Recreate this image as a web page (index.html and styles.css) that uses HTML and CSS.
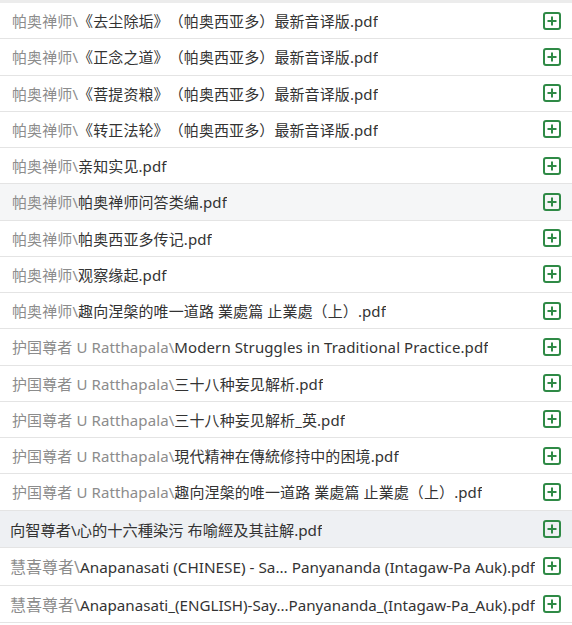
FILE: index.html
```html
<!DOCTYPE html>
<html lang="zh-CN">
<head>
  <meta charset="UTF-8">
  <meta name="viewport" content="width=device-width, initial-scale=1.0">
  <title>文件列表</title>
  <link rel="stylesheet" href="styles.css">
</head>
<body>
  <div class="list-top"></div>
  <ul class="file-list">
    <li class="file-row"><span class="file-name"><span class="dir">帕奥禅师\</span>《去尘除垢》（帕奥西亚多）最新音译版.pdf</span><button class="add-btn"><svg viewBox="0 0 18 18"><rect x="1" y="1" width="16" height="16" rx="2"/><path d="M9 4.5v9M4.5 9h9"/></svg></button></li>
    <li class="file-row"><span class="file-name"><span class="dir">帕奥禅师\</span>《正念之道》（帕奥西亚多）最新音译版.pdf</span><button class="add-btn"><svg viewBox="0 0 18 18"><rect x="1" y="1" width="16" height="16" rx="2"/><path d="M9 4.5v9M4.5 9h9"/></svg></button></li>
    <li class="file-row"><span class="file-name"><span class="dir">帕奥禅师\</span>《菩提资粮》（帕奥西亚多）最新音译版.pdf</span><button class="add-btn"><svg viewBox="0 0 18 18"><rect x="1" y="1" width="16" height="16" rx="2"/><path d="M9 4.5v9M4.5 9h9"/></svg></button></li>
    <li class="file-row"><span class="file-name"><span class="dir">帕奥禅师\</span>《转正法轮》（帕奥西亚多）最新音译版.pdf</span><button class="add-btn"><svg viewBox="0 0 18 18"><rect x="1" y="1" width="16" height="16" rx="2"/><path d="M9 4.5v9M4.5 9h9"/></svg></button></li>
    <li class="file-row"><span class="file-name"><span class="dir">帕奥禅师\</span>亲知实见.pdf</span><button class="add-btn"><svg viewBox="0 0 18 18"><rect x="1" y="1" width="16" height="16" rx="2"/><path d="M9 4.5v9M4.5 9h9"/></svg></button></li>
    <li class="file-row shaded"><span class="file-name"><span class="dir">帕奥禅师\</span>帕奥禅师问答类编.pdf</span><button class="add-btn"><svg viewBox="0 0 18 18"><rect x="1" y="1" width="16" height="16" rx="2"/><path d="M9 4.5v9M4.5 9h9"/></svg></button></li>
    <li class="file-row"><span class="file-name"><span class="dir">帕奥禅师\</span>帕奥西亚多传记.pdf</span><button class="add-btn"><svg viewBox="0 0 18 18"><rect x="1" y="1" width="16" height="16" rx="2"/><path d="M9 4.5v9M4.5 9h9"/></svg></button></li>
    <li class="file-row"><span class="file-name"><span class="dir">帕奥禅师\</span>观察缘起.pdf</span><button class="add-btn"><svg viewBox="0 0 18 18"><rect x="1" y="1" width="16" height="16" rx="2"/><path d="M9 4.5v9M4.5 9h9"/></svg></button></li>
    <li class="file-row"><span class="file-name"><span class="dir">帕奥禅师\</span>趣向涅槃的唯一道路 業處篇 止業處（上）.pdf</span><button class="add-btn"><svg viewBox="0 0 18 18"><rect x="1" y="1" width="16" height="16" rx="2"/><path d="M9 4.5v9M4.5 9h9"/></svg></button></li>
    <li class="file-row"><span class="file-name"><span class="dir">护国尊者 U Ratthapala\</span>Modern Struggles in Traditional Practice.pdf</span><button class="add-btn"><svg viewBox="0 0 18 18"><rect x="1" y="1" width="16" height="16" rx="2"/><path d="M9 4.5v9M4.5 9h9"/></svg></button></li>
    <li class="file-row"><span class="file-name"><span class="dir">护国尊者 U Ratthapala\</span>三十八种妄见解析.pdf</span><button class="add-btn"><svg viewBox="0 0 18 18"><rect x="1" y="1" width="16" height="16" rx="2"/><path d="M9 4.5v9M4.5 9h9"/></svg></button></li>
    <li class="file-row"><span class="file-name"><span class="dir">护国尊者 U Ratthapala\</span>三十八种妄见解析_英.pdf</span><button class="add-btn"><svg viewBox="0 0 18 18"><rect x="1" y="1" width="16" height="16" rx="2"/><path d="M9 4.5v9M4.5 9h9"/></svg></button></li>
    <li class="file-row"><span class="file-name"><span class="dir">护国尊者 U Ratthapala\</span>現代精神在傳統修持中的困境.pdf</span><button class="add-btn"><svg viewBox="0 0 18 18"><rect x="1" y="1" width="16" height="16" rx="2"/><path d="M9 4.5v9M4.5 9h9"/></svg></button></li>
    <li class="file-row"><span class="file-name"><span class="dir">护国尊者 U Ratthapala\</span>趣向涅槃的唯一道路 業處篇 止業處（上）.pdf</span><button class="add-btn"><svg viewBox="0 0 18 18"><rect x="1" y="1" width="16" height="16" rx="2"/><path d="M9 4.5v9M4.5 9h9"/></svg></button></li>
    <li class="file-row large active"><span class="file-name"><span class="dir">向智尊者\</span>心的十六種染污 布喻經及其註解.pdf</span><button class="add-btn"><svg viewBox="0 0 18 18"><rect x="1" y="1" width="16" height="16" rx="2"/><path d="M9 4.5v9M4.5 9h9"/></svg></button></li>
    <li class="file-row large"><span class="file-name"><span class="dir">慧喜尊者\</span><span class="latin">Anapanasati (CHINESE) - Sa... Panyananda (Intagaw-Pa Auk).pdf</span></span><button class="add-btn"><svg viewBox="0 0 18 18"><rect x="1" y="1" width="16" height="16" rx="2"/><path d="M9 4.5v9M4.5 9h9"/></svg></button></li>
    <li class="file-row large"><span class="file-name"><span class="dir">慧喜尊者\</span><span class="latin narrow">Anapanasati_(ENGLISH)-Say...Panyananda_(Intagaw-Pa_Auk).pdf</span></span><button class="add-btn"><svg viewBox="0 0 18 18"><rect x="1" y="1" width="16" height="16" rx="2"/><path d="M9 4.5v9M4.5 9h9"/></svg></button></li>
  </ul>
</body>
</html>
```

FILE: styles.css
```css
* {
  box-sizing: border-box;
  margin: 0;
  padding: 0;
}

body {
  font-family: "Noto Sans", "Noto Sans CJK SC", sans-serif;
  background: #fff;
  color: #333;
  text-spacing-trim: space-all;
}

.list-top {
  height: 3px;
  background: #ececec;
}

.file-list {
  list-style: none;
}

.file-row {
  display: flex;
  align-items: center;
  justify-content: space-between;
  height: 36.25px;
  padding: 0 11px 0 12px;
  border-bottom: 1px solid #e4e4e4;
  font-size: 15px;
  letter-spacing: 0.1px;
  white-space: nowrap;
}

.file-name {
  overflow: hidden;
}

.file-row.shaded {
  background: #f5f6f7;
}

.file-row.large {
  height: 37.5px;
  padding-left: 10px;
  font-size: 15.25px;
  letter-spacing: 0;
}

.file-row.large .dir {
  font-size: 16px;
}

.file-row.large .latin {
  font-size: 15.3px;
}

.file-row.large .latin.narrow {
  font-size: 15.15px;
}

.file-row.active {
  background: #eef0f3;
}

.file-row.active .dir {
  color: #333;
  font-size: 15.25px;
}

.dir {
  color: #8c8c8c;
}

.add-btn {
  display: flex;
  flex-shrink: 0;
  margin-left: 6px;
  background: none;
  border: none;
  cursor: pointer;
}

.add-btn svg {
  width: 18px;
  height: 18px;
  fill: none;
  stroke: #2f8a46;
  stroke-width: 2;
}
```
